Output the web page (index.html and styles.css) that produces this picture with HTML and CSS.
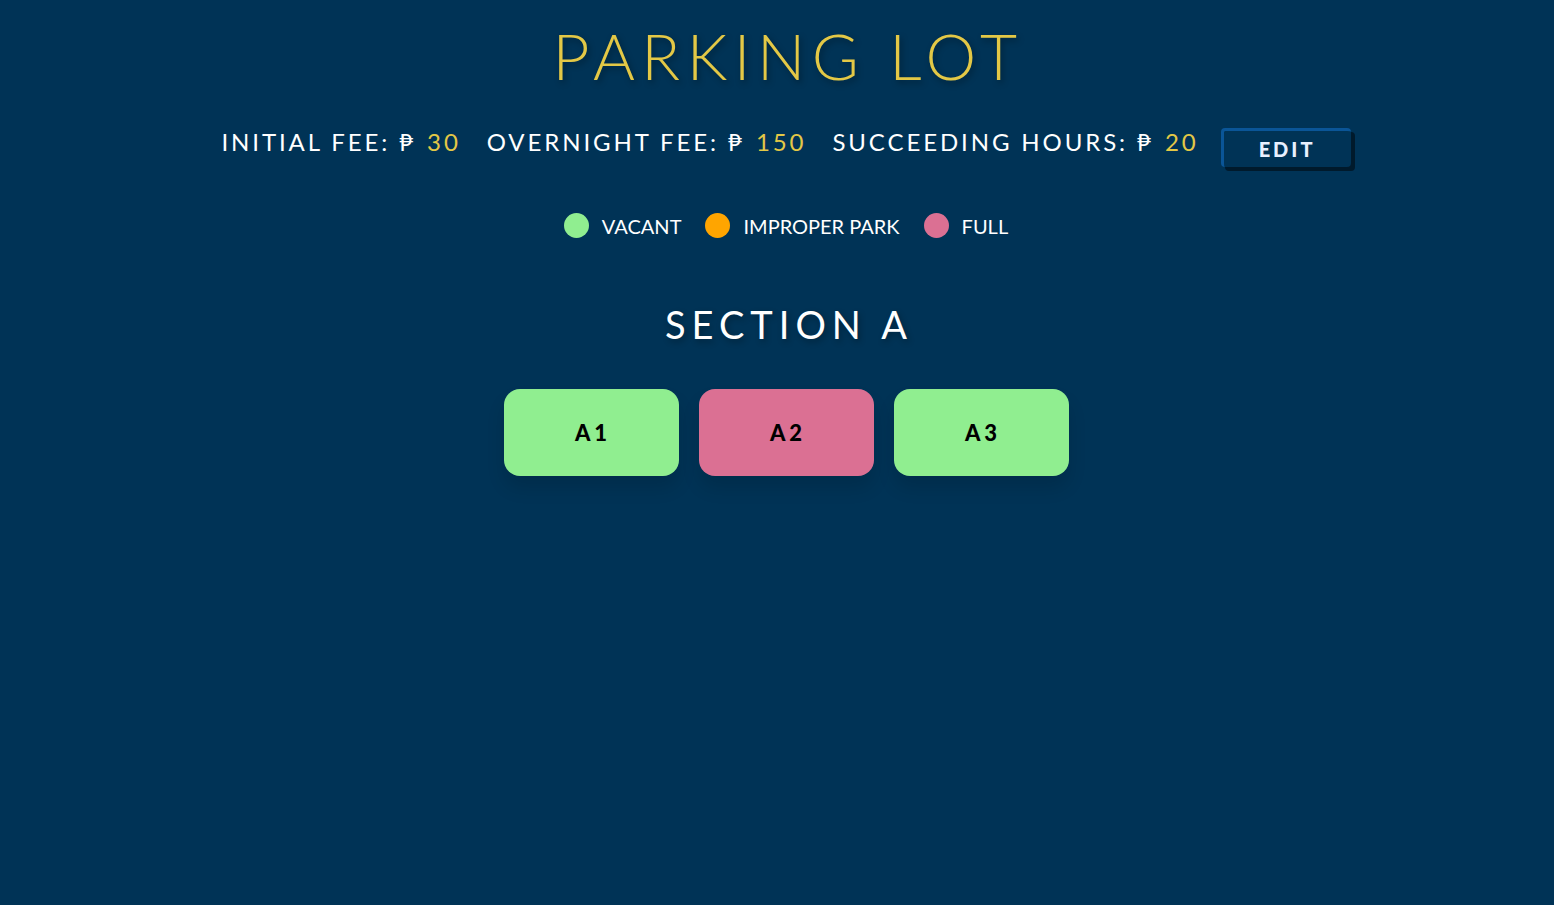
FILE: index.html
```html
<!DOCTYPE html>
<html>
<head>
<meta charset="utf-8">
<link rel="stylesheet" href="styles.css">
</head>
<body>
<main class="page">
  <h1 class="title">PARKING LOT</h1>
  <div class="fees">
    <span class="fee">INITIAL FEE: ₱ <span class="num">30</span></span>
    <span class="fee">OVERNIGHT FEE: ₱ <span class="num">150</span></span>
    <span class="fee">SUCCEEDING HOURS: ₱ <span class="num">20</span></span>
    <button class="edit">EDIT</button>
  </div>
  <div class="legend">
    <span class="item"><span class="dot vacant"></span>VACANT</span>
    <span class="item"><span class="dot improper"></span>IMPROPER PARK</span>
    <span class="item"><span class="dot full"></span>FULL</span>
  </div>
  <h2 class="section">SECTION A</h2>
  <div class="slots">
    <div class="slot vacant">A1</div>
    <div class="slot full">A2</div>
    <div class="slot vacant">A3</div>
  </div>
</main>
</body>
</html>
```
FILE: styles.css
```css
html, body {
  margin: 0;
  padding: 0;
  background: #003356;
  height: 100%;
}
body {
  font-family: Lato, "Open Sans", sans-serif;
  color: #ffffff;
}
.page {
  display: flex;
  flex-direction: column;
  align-items: center;
  padding-top: 18px;
  padding-left: 18px;
}
.title {
  margin: 0;
  font-weight: 300;
  font-size: 64px;
  line-height: 76px;
  letter-spacing: 6.5px;
  color: #e3c846;
  text-shadow: 2px 3px 6px rgba(0, 0, 0, 0.35);
  padding-left: 4px;
}
.fees {
  display: flex;
  align-items: center;
  margin-top: 28px;
  font-size: 24px;
  letter-spacing: 2.9px;
  gap: 26px;
}
.num {
  color: #e3c846;
  margin-left: 2px;
}
.edit {
  margin-left: -4px;
  width: 130px;
  height: 39px;
  background: #003356;
  color: #e8f0ff;
  font-family: Lato, sans-serif;
  font-weight: 900;
  font-size: 20px;
  letter-spacing: 3px;
  border: none;
  border-top: 3px solid #0a5597;
  border-left: 3px solid #0a5597;
  border-radius: 4px;
  box-shadow: 4px 4px 0 #001a2c;
  position: relative;
  top: 6px;
  padding-left: 6px;
}
.legend {
  display: flex;
  align-items: center;
  margin-top: 52px;
  font-size: 20px;
  gap: 24px;
}
.item {
  display: flex;
  align-items: center;
  gap: 13px;
}
.dot {
  width: 25px;
  height: 25px;
  border-radius: 50%;
  display: inline-block;
}
.dot.vacant, .slot.vacant { background: #90ee90; }
.dot.improper { background: #ffa500; }
.dot.full, .slot.full { background: #db7093; }
.section {
  margin: 62px 0 0 0;
  font-weight: 400;
  font-size: 38px;
  letter-spacing: 6px;
  line-height: 48px;
  padding-left: 6px;
  text-shadow: 2px 3px 6px rgba(0, 0, 0, 0.3);
}
.slots {
  display: flex;
  gap: 20px;
  margin-top: 41px;
}
.slot {
  width: 175px;
  height: 87px;
  border-radius: 16px;
  display: flex;
  align-items: center;
  justify-content: center;
  color: #000;
  font-weight: 900;
  font-size: 22px;
  letter-spacing: 4px;
  padding-left: 4px;
  box-sizing: border-box;
  box-shadow: 0 12px 18px rgba(0, 0, 0, 0.12);
}
```
